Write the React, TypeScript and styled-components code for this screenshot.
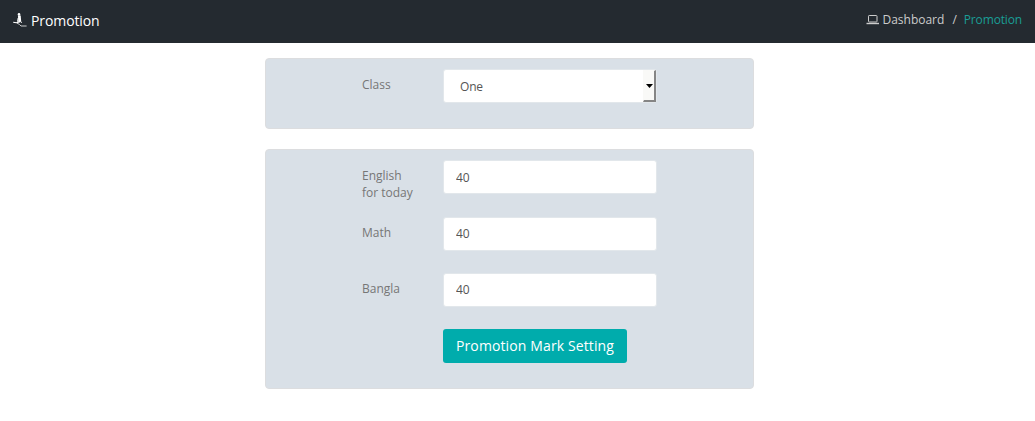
import React from "react";
import styled, { createGlobalStyle } from "styled-components";

const GlobalStyle = createGlobalStyle`
  *, *::before, *::after { box-sizing: border-box; }
  body {
    margin: 0;
    background: #fff;
    color: #767676;
    font-family: "Open Sans", sans-serif;
    font-size: 12px;
    line-height: 17px;
  }
`;

const Header = styled.header`
  display: flex;
  align-items: flex-start;
  justify-content: space-between;
  height: 43px;
  padding: 11px 13px 0 12px;
  background: #242a30;
`;

const Title = styled.h1`
  display: flex;
  margin: 0;
  gap: 3px;
  color: #fff;
  font-size: 14px;
  font-weight: 400;
  line-height: 20px;
  letter-spacing: -0.1px;
`;

const TitleIcon = styled.svg`
  width: 16px;
  height: 16px;
  margin-top: 1px;
`;

const Breadcrumb = styled.nav`
  display: flex;
  color: #ccc;
`;

const Crumb = styled.a<{ $active?: boolean }>`
  display: flex;
  gap: 2px;
  color: ${(p) => (p.$active ? "#1a9e96" : "#ccc")};
  letter-spacing: ${(p) => (p.$active ? "-0.15px" : "0")};
`;

const LaptopIcon = styled.svg`
  width: 14px;
  height: 12px;
  margin-top: 3px;
`;

const Separator = styled.span`
  padding: 0 7px 0 8px;
`;

const Content = styled.main`
  display: flex;
  flex-direction: column;
  gap: 20px;
  width: 489px;
  margin: 15px 0 0 265px;
`;

const Panel = styled.form<{ $height: number }>`
  display: flex;
  flex-direction: column;
  align-items: flex-start;
  height: ${(p) => p.$height}px;
  padding: 10px 96px;
  background: #d9e0e7;
  border: 1px solid #dcdddf;
  border-radius: 4px;
`;

const Row = styled.div<{ $gap?: number }>`
  display: grid;
  grid-template-columns: 54px 214px;
  column-gap: 27px;
  align-items: start;
  margin-bottom: ${(p) => p.$gap ?? 0}px;
`;

const Label = styled.label`
  padding-top: 7px;
`;

const Input = styled.input<{ $raised?: boolean }>`
  width: 214px;
  height: 34px;
  padding: ${(p) => (p.$raised ? "5px 12px 7px" : "6px 12px")};
  color: #555;
  background: #fff;
  border: 1px solid #e2e7eb;
  border-radius: 3px;
  font: inherit;
`;

const Select = styled.button`
  display: flex;
  align-items: stretch;
  justify-content: space-between;
  width: 214px;
  height: 34px;
  padding: 0 0 0 16px;
  color: #555;
  background: #fff;
  border: 1px solid #e2e7eb;
  border-radius: 3px;
  font: inherit;
  text-align: left;
`;

const SelectValue = styled.span`
  padding-top: 8px;
  letter-spacing: -0.2px;
`;

const SelectArrow = styled.span`
  display: flex;
  align-items: center;
  justify-content: center;
  width: 13px;
  background: #f9f9f7;
  border: 1px solid #f9f9f7;
  border-right: 2px solid #858585;
  border-bottom: 2px solid #858585;
`;

const Submit = styled.button`
  height: 34px;
  width: 184px;
  margin-left: 81px;
  padding: 0;
  color: #fff;
  background: #00acac;
  border: 0;
  border-radius: 3px;
  font: 14px/20px "Open Sans", sans-serif;
  letter-spacing: 0.12px;
`;

const subjects = [
  { name: "English for today", mark: "40", gap: 16 },
  { name: "Math", mark: "40", gap: 22, raised: true },
  { name: "Bangla", mark: "40", gap: 22, raised: true },
];

export default function App() {
  return (
    <>
      <GlobalStyle />
      <Header>
        <Title>
          <TitleIcon viewBox="0 0 16 16" fill="none" stroke="#fff">
            <circle cx="7" cy="2.4" r="1.3" fill="#fff" stroke="none" />
            <path d="M7.3 3.5 7.8 9.8" strokeWidth="2.8" />
            <path d="M6.2 6 5.6 9.6M1.2 10.2l3.2.6 4-1.2" strokeWidth="1.1" />
            <path d="M4.8 11l2.6 1.4 1.6 1.6h5.6M8.8 9.4l1 1.6" strokeWidth=".9" stroke="#ddd" />
          </TitleIcon>
          Promotion
        </Title>
        <Breadcrumb>
          <Crumb>
            <LaptopIcon viewBox="0 0 14 12" fill="none" stroke="#ccc">
              <rect x="2.5" y="1.5" width="8.5" height="6.5" rx="0.7" />
              <path d="M.5 9.5h12.5" strokeWidth="1.4" />
            </LaptopIcon>
            Dashboard
          </Crumb>
          <Separator>/</Separator>
          <Crumb $active>Promotion</Crumb>
        </Breadcrumb>
      </Header>
      <Content>
        <Panel $height={71}>
          <Row>
            <Label>Class</Label>
            <Select type="button">
              <SelectValue>One</SelectValue>
              <SelectArrow>
                <svg width="7" height="4" viewBox="0 0 7 4">
                  <path d="M0 0h7L3.5 4z" fill="#000" />
                </svg>
              </SelectArrow>
            </Select>
          </Row>
        </Panel>
        <Panel $height={240}>
          {subjects.map((s) => (
            <Row key={s.name} $gap={s.gap}>
              <Label>{s.name}</Label>
              <Input defaultValue={s.mark} $raised={s.raised} />
            </Row>
          ))}
          <Submit type="button">Promotion Mark Setting</Submit>
        </Panel>
      </Content>
    </>
  );
}
